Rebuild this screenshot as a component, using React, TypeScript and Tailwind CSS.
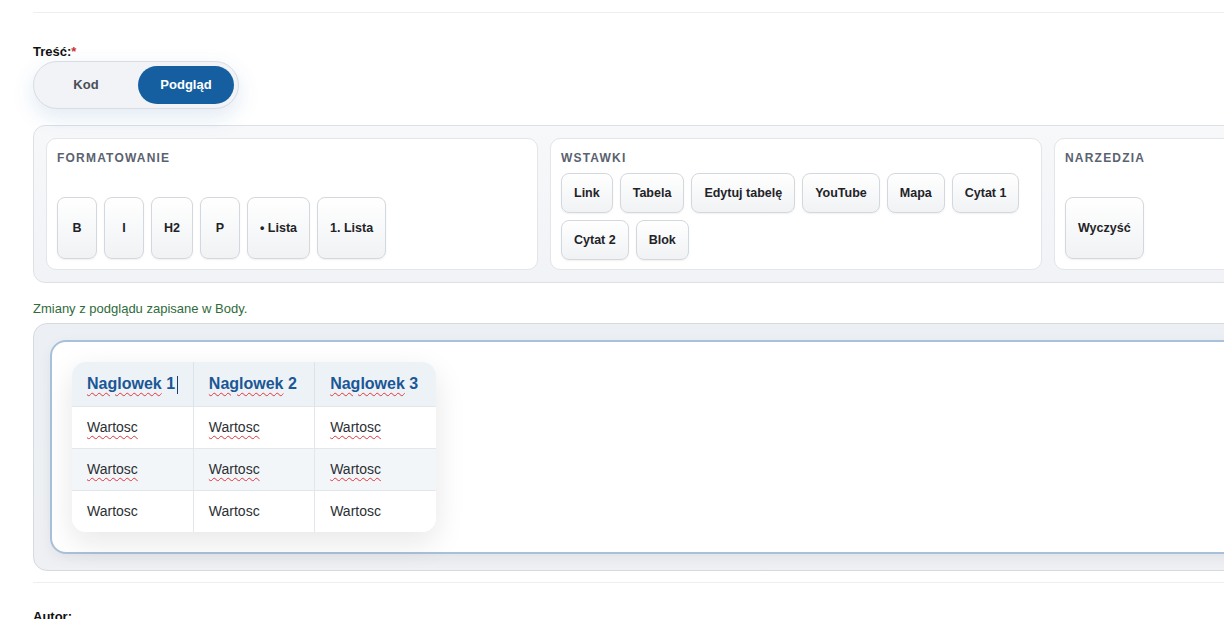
import { type JSX } from 'react';

const btn =
    'flex items-center justify-center rounded-[8px] border border-[#d3d8de] bg-gradient-to-b from-white to-[#f0f2f4] px-3 text-[12.5px] font-bold text-[#1f2328] shadow-[0_1px_2px_rgba(15,23,42,0.06)]';

const title = 'text-[12px] font-bold uppercase leading-4 tracking-[0.1em] text-[#5a6270]';

const group = 'flex h-[132px] flex-col rounded-[10px] border border-[#e2e5e9] bg-white px-[10px] pt-[11px] pb-[10px]';

function Wavy({ children }: { children: string }): JSX.Element {
    return (
        <span className="underline decoration-[#e0343a] decoration-wavy decoration-1 underline-offset-[3px]">
            {children}
        </span>
    );
}

export default function App(): JSX.Element {
    const formatting = ['B', 'I', 'H2', 'P', '• Lista', '1. Lista'];
    const inserts = ['Link', 'Tabela', 'Edytuj tabelę', 'YouTube', 'Mapa', 'Cytat 1', 'Cytat 2', 'Blok'];
    const rows = [
        { bg: 'bg-white', wavy: true },
        { bg: 'bg-[#f3f6f9]', wavy: true },
        { bg: 'bg-white', wavy: false },
    ];

    return (
        <div className="min-h-screen w-full overflow-hidden bg-white font-['Liberation_Sans',Arial,sans-serif] text-[#111]">
            <div className="ml-[33px] w-[1526px] pt-3">
                <div className="border-t border-[#eceef1]" />

                <div className="pt-[31px]">
                    <label className="mb-px block text-[13px] font-bold leading-4 text-[#111]">
                        Treść:<span className="text-[#d0312d]">*</span>
                    </label>

                    <div className="inline-flex gap-1 rounded-full border border-[#d9dde3] bg-[#f1f3f6] p-1 shadow-[0_8px_22px_rgba(21,95,160,0.13)]">
                        <button className="h-[38px] w-[96px] rounded-full text-[13px] font-bold text-[#4a4f57]">Kod</button>
                        <button className="h-[38px] w-[96px] rounded-full bg-[#155fa0] text-[13px] font-bold text-white">
                            Podgląd
                        </button>
                    </div>
                </div>

                <div className="mt-4 rounded-[12px] border border-[#dde1e6] bg-gradient-to-b from-[#f7f8fa] to-[#f1f3f6] p-3">
                    <div className="grid grid-cols-3 gap-3">
                        <div className={group}>
                            <div className={title}>Formatowanie</div>
                            <div className="mt-auto flex gap-[7px]">
                                {formatting.map((b) => (
                                    <button key={b} className={`${btn} h-[62px] min-w-[40px]`}>
                                        {b}
                                    </button>
                                ))}
                            </div>
                        </div>

                        <div className={group}>
                            <div className={`${title} mb-[7px]`}>Wstawki</div>
                            <div className="flex flex-wrap gap-[7px]">
                                {inserts.map((b) => (
                                    <button key={b} className={`${btn} h-10`}>
                                        {b}
                                    </button>
                                ))}
                            </div>
                        </div>

                        <div className={group}>
                            <div className={title}>Narzedzia</div>
                            <div className="mt-auto flex gap-[7px]">
                                <button className={`${btn} h-[62px]`}>Wyczyść</button>
                            </div>
                        </div>
                    </div>
                </div>

                <p className="mt-[18px] text-[13px] leading-4 text-[#2f6b3b]">Zmiany z podglądu zapisane w Body.</p>

                <div className="mt-[6px] rounded-[14px] border border-[#d5dae0] bg-gradient-to-b from-[#ecf0f4] to-[#eef0f3] p-4">
                    <div className="rounded-[16px] border-2 border-[#a8c1da] bg-white p-5 shadow-[0_4px_14px_rgba(15,23,42,0.06)]">
                        <div className="w-[364px] overflow-hidden rounded-[14px] bg-white shadow-[0_10px_30px_rgba(15,23,42,0.10)]">
                            <table className="w-full table-fixed border-collapse text-left">
                                <thead>
                                    <tr className="h-[44px] bg-[#edf2f7]">
                                        {['Naglowek 1', 'Naglowek 2', 'Naglowek 3'].map((h, i) => (
                                            <th
                                                key={h}
                                                className={`w-[121px] whitespace-nowrap px-[15px] text-[16px] font-bold text-[#1b5795] ${i < 2 ? 'border-r border-[#dde3ea]' : ''}`}
                                            >
                                                <Wavy>{h.split(' ')[0]}</Wavy> {h.split(' ')[1]}
                                                {i === 0 && <span className="ml-[2px] inline-block h-[18px] w-px bg-[#1b3f6a] align-middle" />}
                                            </th>
                                        ))}
                                    </tr>
                                </thead>
                                <tbody>
                                    {rows.map((r, ri) => (
                                        <tr key={ri} className={`h-[42px] border-t border-[#e3e7ec] ${r.bg}`}>
                                            {[0, 1, 2].map((c) => (
                                                <td
                                                    key={c}
                                                    className={`px-[15px] text-[14px] text-[#2b2f33] ${c < 2 ? 'border-r border-[#e3e7ec]' : ''}`}
                                                >
                                                    {r.wavy ? <Wavy>Wartosc</Wavy> : 'Wartosc'}
                                                </td>
                                            ))}
                                        </tr>
                                    ))}
                                </tbody>
                            </table>
                        </div>
                    </div>
                </div>

                <div className="mt-[11px] border-t border-[#eceef1] pt-[26px]">
                    <label className="block text-[13px] font-bold leading-4 text-[#111]">Autor:</label>
                </div>
            </div>
        </div>
    );
}
